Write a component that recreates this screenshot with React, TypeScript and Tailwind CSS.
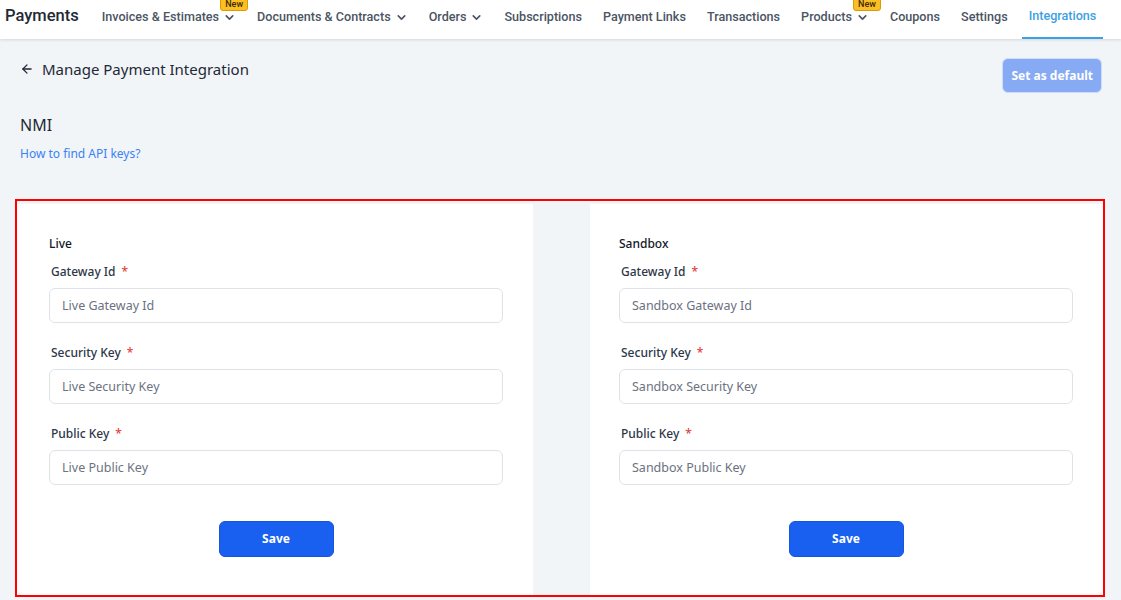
import { ArrowLeft, ChevronDown } from 'lucide-react';

interface NavItem {
  label: string;
  chevron?: boolean;
  badge?: boolean;
  active?: boolean;
}

const navItems: NavItem[] = [
  { label: 'Invoices & Estimates', chevron: true, badge: true },
  { label: 'Documents & Contracts', chevron: true },
  { label: 'Orders', chevron: true },
  { label: 'Subscriptions' },
  { label: 'Payment Links' },
  { label: 'Transactions' },
  { label: 'Products', chevron: true, badge: true },
  { label: 'Coupons' },
  { label: 'Settings' },
  { label: 'Integrations', active: true },
];

function Field({ label, placeholder }: { label: string; placeholder: string }) {
  return (
    <div className="flex flex-col">
      <label className="pl-[2px] text-[12px] font-medium text-[#2d3748] leading-[18px]">
        {label}
        <span className="ml-[6px] text-[#e53e3e]">*</span>
      </label>
      <input
        type="text"
        placeholder={placeholder}
        className="mt-[7px] h-[35px] w-full rounded-[6px] border border-[#dfe3e8] bg-white px-3 text-[12.5px] text-[#374151] placeholder:text-[#6b7280] outline-none"
      />
    </div>
  );
}

function Panel({ title, prefix, className }: { title: string; prefix: string; className: string }) {
  return (
    <div className={`bg-white pt-[30px] ${className}`}>
      <h3 className="text-[12px] font-medium text-[#111827] leading-[20px]">{title}</h3>
      <div className="mt-[9px] flex flex-col gap-[21px]">
        <Field label="Gateway Id" placeholder={`${prefix} Gateway Id`} />
        <Field label="Security Key" placeholder={`${prefix} Security Key`} />
        <Field label="Public Key" placeholder={`${prefix} Public Key`} />
      </div>
      <div className="mt-[36px] flex justify-center">
        <button className="h-[36px] w-[115px] rounded-[6px] border border-[#1656d9] bg-[#1a60f0] text-[12px] font-bold text-white">
          Save
        </button>
      </div>
    </div>
  );
}

export default function App() {
  return (
    <div className="min-h-[600px] bg-[#f1f5f8] font-['Noto_Sans',sans-serif]">
      <nav className="flex h-[39px] items-center whitespace-nowrap bg-white shadow-[0_1px_3px_rgba(0,0,0,0.12)] font-['Roboto',sans-serif]">
        <span className="ml-[5px] mr-[16px] pb-[6px] text-[16.5px] font-medium text-[#1f2937]">Payments</span>
        <ul className="flex h-full items-center gap-[7px]">
          {navItems.map(item => (
            <li
              key={item.label}
              className={`relative flex h-full items-center px-[7px] pb-[4px] text-[12.6px] font-medium ${
                item.active ? 'border-b-2 border-[#3ea0e4] text-[#3ea0e4]' : 'text-[#4b5563]'
              }`}
            >
              {item.label}
              {item.chevron && <ChevronDown className="ml-[4px] h-[13px] w-[13px]" strokeWidth={3} />}
              {item.badge && (
                <span className="absolute right-[-5px] top-[-3px] rounded-[3px] border border-[#d99a06] bg-[#fbbf24] px-[4px] text-[9px] leading-[12px] font-medium text-[#3b2a05]">
                  New
                </span>
              )}
            </li>
          ))}
        </ul>
      </nav>

      <div className="flex items-start justify-between pl-[20px] pr-[19px] pt-[19px]">
        <div className="flex items-center">
          <ArrowLeft className="h-[14px] w-[14px] text-[#1f2937]" strokeWidth={2.2} />
          <h1 className="ml-[8px] text-[15px] text-[#1f2937]">Manage Payment Integration</h1>
        </div>
        <button className="h-[35px] rounded-[6px] border border-[#cddcf9] bg-[#86aaf4] px-[8px] text-[12px] font-bold text-white">
          Set as default
        </button>
      </div>

      <div className="pl-[20px] pt-[20px]">
        <h2 className="text-[16px] text-[#1f2937] leading-[24px]">NMI</h2>
        <a className="mt-[8px] block text-[12px] text-[#3b82f6]">How to find API keys?</a>
      </div>

      <div className="ml-[15px] mt-[36px] w-[1090px] border-2 border-[#ff0000] pt-[3px]">
        <div className="flex h-[391px]">
          <Panel title="Live" prefix="Live" className="w-[516px] pl-[32px] pr-[30px]" />
          <div className="w-[57px]" />
          <Panel title="Sandbox" prefix="Sandbox" className="flex-1 pl-[29px] pr-[30px]" />
        </div>
      </div>
    </div>
  );
}
